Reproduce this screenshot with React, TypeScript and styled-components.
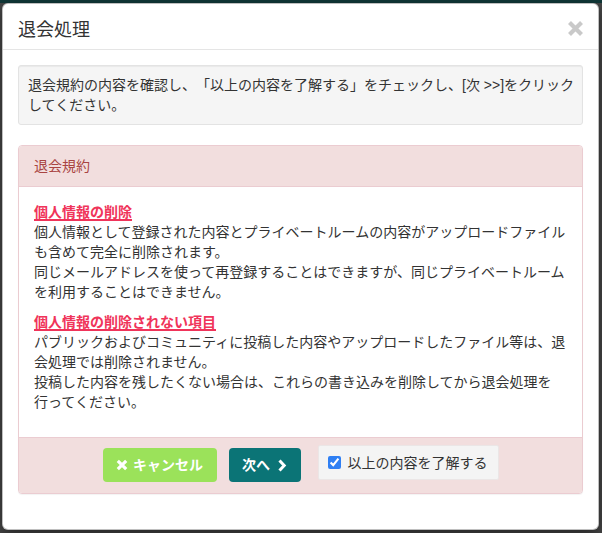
import React from "react";
import styled, { createGlobalStyle } from "styled-components";

const Global = createGlobalStyle`
  html, body { margin: 0; padding: 0; }
  body {
    background: linear-gradient(#103838 0, #103838 3px, #474747 3px);
    font-family: "Liberation Sans", "Noto Sans CJK JP", sans-serif;
    font-size: 14px;
    line-height: 20px;
    color: #333;
    min-height: 533px;
    text-spacing-trim: space-all;
  }
`;

const Backdrop = styled.div`
  padding: 3px 3px 3px 2px;
`;

const Modal = styled.div`
  width: 597px;
  box-sizing: border-box;
  background: #fff;
  border: 1px solid rgba(0, 0, 0, 0.25);
  border-radius: 6px;
  box-shadow: 0 5px 15px rgba(0, 0, 0, 0.5);
`;

const Header = styled.div`
  display: flex;
  align-items: center;
  justify-content: space-between;
  padding: 14px 15px 6px 15px;
  border-bottom: 1px solid #e5e5e5;
`;

const Title = styled.h4`
  margin: 0;
  font-size: 18px;
  font-weight: 400;
  line-height: 25px;
  color: #333;
`;

const Close = styled.button`
  border: 0;
  background: none;
  padding: 0;
  margin: -4px -1px 0 0;
  width: 17px;
  height: 17px;
  display: flex;
  cursor: pointer;
`;

const Body = styled.div`
  padding: 15px;
`;

const Well = styled.div`
  background: #f5f5f5;
  border: 1px solid #e3e3e3;
  border-radius: 3px;
  padding: 9px;
  margin-bottom: 20px;
  white-space: nowrap;
  box-shadow: inset 0 1px 1px rgba(0, 0, 0, 0.05);
`;

const Panel = styled.div`
  border: 1px solid #ebccd1;
  border-radius: 4px;
  background: #fff;
  margin-bottom: 20px;
  overflow: hidden;
  box-shadow: 0 1px 1px rgba(0, 0, 0, 0.05);
`;

const PanelHeading = styled.div`
  background: #f2dede;
  color: #a94442;
  padding: 10px 15px;
  border-bottom: 1px solid #ebccd1;
`;

const PanelBody = styled.div`
  padding: 15px;
  white-space: nowrap;
`;

const Section = styled.p`
  margin: 0 0 10px;
`;

const SubTitle = styled.span`
  display: inline-block;
  font-weight: 700;
  color: #f0345a;
  text-decoration: underline;
  text-decoration-thickness: 2px;
  text-underline-offset: 2px;
`;

const PanelFooter = styled.div`
  background: #f2dede;
  border-top: 1px solid #ebccd1;
  padding: 7px 15px 11px;
  display: flex;
  justify-content: center;
  align-items: flex-start;
`;

const Button = styled.button<{ $bg: string }>`
  margin-top: 3px;
  height: 34px;
  box-sizing: border-box;
  border: 1px solid transparent;
  border-radius: 4px;
  background: ${(p) => p.$bg};
  color: #fff;
  font-family: "Liberation Sans", "Noto Sans CJK JP", sans-serif;
  font-size: 14px;
  font-weight: 700;
  line-height: 20px;
  padding: 6px 0;
  display: inline-flex;
  align-items: center;
  justify-content: center;
  white-space: nowrap;
  gap: 5px;
  cursor: pointer;
  svg { flex: none; }
`;

const CancelButton = styled(Button)`
  width: 114px;
  margin-right: 12px;
`;

const NextButton = styled(Button)`
  width: 72px;
  gap: 7px;
  margin-right: 17px;
`;

const Agree = styled.label`
  display: inline-flex;
  align-items: center;
  gap: 7px;
  height: 35px;
  box-sizing: border-box;
  padding: 0 10px 0 9px;
  background: #f4f4f4;
  border: 1px solid #ebe6e6;
  border-radius: 2px;
  color: #333;
  white-space: nowrap;
  cursor: pointer;
`;

const Check = styled.input`
  width: 13px;
  height: 13px;
  margin: 0;
  accent-color: #2f7ff3;
`;

const TimesIcon = () => (
  <svg width="12" height="12" viewBox="0 0 12 12">
    <path d="M1.8 1.8 L10.2 10.2 M10.2 1.8 L1.8 10.2" stroke="#fff" strokeWidth="3.2" />
  </svg>
);

const ChevronIcon = () => (
  <svg width="10" height="13" viewBox="0 0 10 13">
    <path d="M2.5 1.5 L7.2 6.5 L2.5 11.5" stroke="#fff" strokeWidth="3" fill="none" />
  </svg>
);

export default function App() {
  return (
    <>
      <Global />
      <Backdrop>
        <Modal>
          <Header>
            <Title>退会処理</Title>
            <Close aria-label="閉じる">
              <svg width="17" height="17" viewBox="0 0 17 17">
                <path d="M2.5 2.5 L14.5 14.5 M14.5 2.5 L2.5 14.5" stroke="#c9c9c9" strokeWidth="4.2" strokeLinecap="butt" />
              </svg>
            </Close>
          </Header>
          <Body>
            <Well>
              退会規約の内容を確認し、「以上の内容を了解する」をチェックし、[次 &gt;&gt;]をクリック
              <br />
              してください。
            </Well>
            <Panel>
              <PanelHeading>退会規約</PanelHeading>
              <PanelBody>
                <Section>
                  <SubTitle>個人情報の削除</SubTitle>
                  <br />
                  個人情報として登録された内容とプライベートルームの内容がアップロードファイル
                  <br />
                  も含めて完全に削除されます。
                  <br />
                  同じメールアドレスを使って再登録することはできますが、同じプライベートルーム
                  <br />
                  を利用することはできません。
                </Section>
                <Section>
                  <SubTitle>個人情報の削除されない項目</SubTitle>
                  <br />
                  パブリックおよびコミュニティに投稿した内容やアップロードしたファイル等は、退
                  <br />
                  会処理では削除されません。
                  <br />
                  投稿した内容を残したくない場合は、これらの書き込みを削除してから退会処理を
                  <br />
                  行ってください。
                </Section>
              </PanelBody>
              <PanelFooter>
                <CancelButton $bg="#9be25a">
                  <TimesIcon />
                  キャンセル
                </CancelButton>
                <NextButton $bg="#0b7476">
                  次へ
                  <ChevronIcon />
                </NextButton>
                <Agree>
                  <Check type="checkbox" defaultChecked />
                  以上の内容を了解する
                </Agree>
              </PanelFooter>
            </Panel>
          </Body>
        </Modal>
      </Backdrop>
    </>
  );
}
